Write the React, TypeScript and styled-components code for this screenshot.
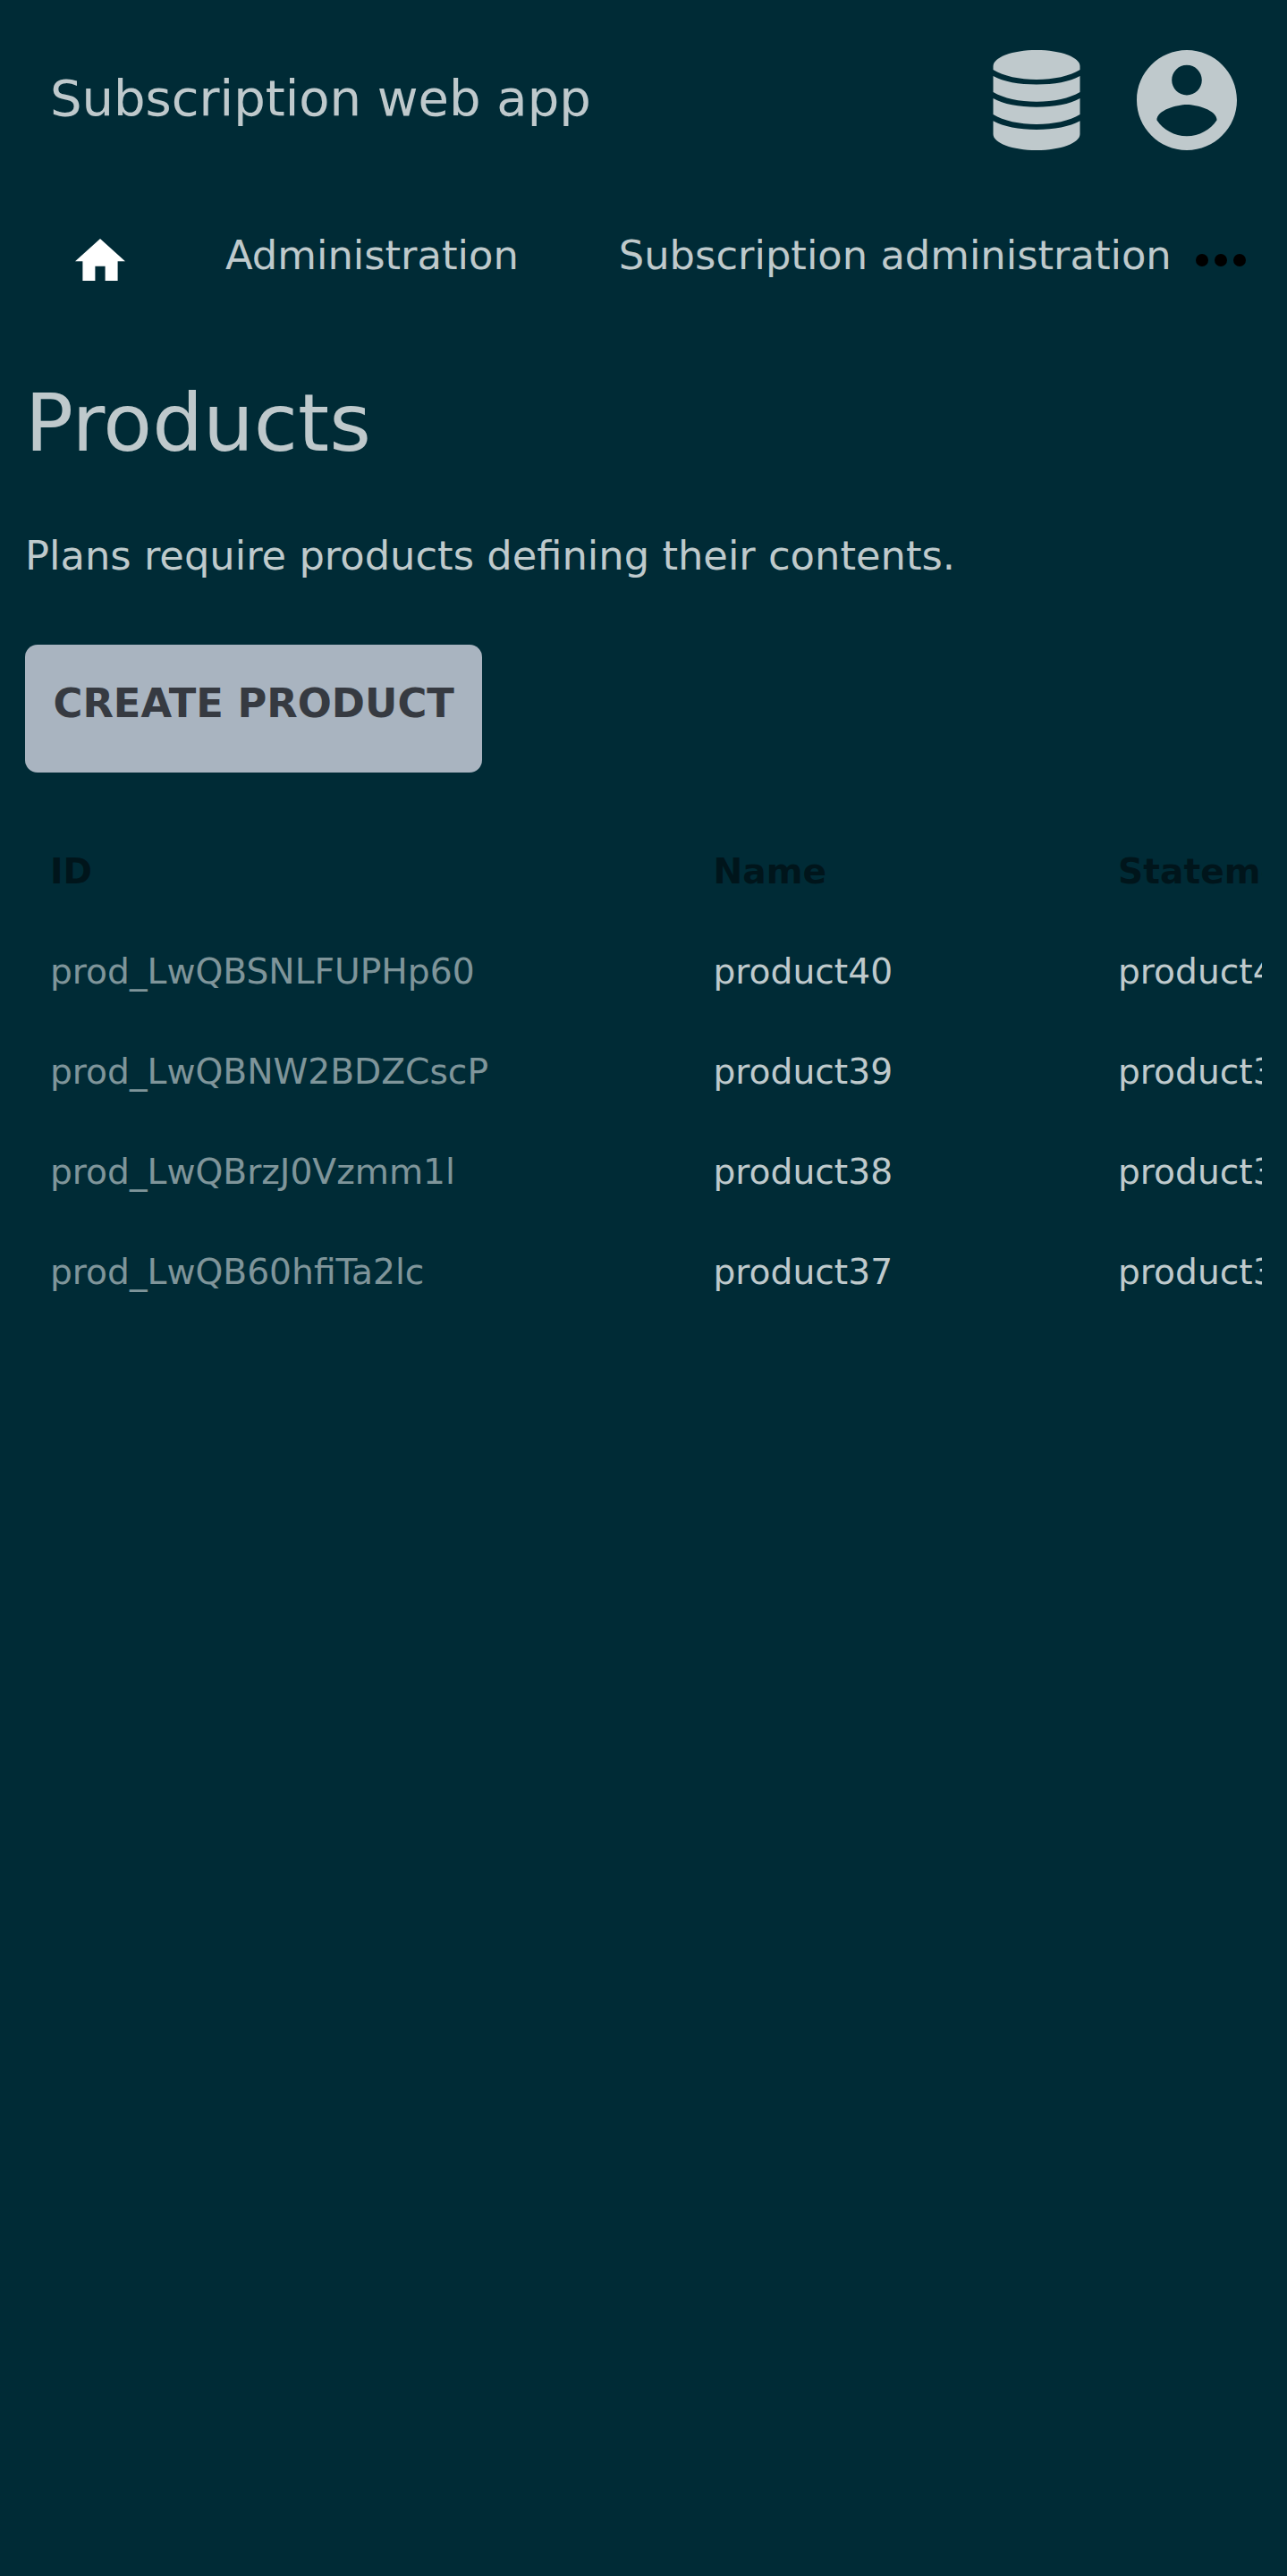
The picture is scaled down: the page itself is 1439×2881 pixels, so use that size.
import React from "react";
import styled, { createGlobalStyle } from "styled-components";

const GlobalStyle = createGlobalStyle`
  *, *::before, *::after { box-sizing: border-box; }
  html, body { margin: 0; background: #002b36; }
  body {
    font-family: "DejaVu Sans", sans-serif;
    font-size: 44.8px;
    color: rgba(255, 255, 255, 0.75);
  }
`;

const Page = styled.div`
  min-height: 2881px;
  width: 100%;
  overflow: hidden;
`;

const Header = styled.header`
  display: flex;
  align-items: center;
  justify-content: space-between;
  height: 224px;
  padding: 0 56px;
`;

const Title = styled.div`
  font-size: 56px;
  line-height: 70px;
  padding-bottom: 5px;
`;

const HeaderIcons = styled.div`
  display: flex;
  align-items: center;
  gap: 63.5px;
`;

const Icon = styled.svg<{ $w: number; $h: number }>`
  display: block;
  flex: none;
  width: ${(p) => p.$w}px;
  height: ${(p) => p.$h}px;
  fill: currentColor;
`;

const Nav = styled.nav`
  display: flex;
  height: 123px;
  padding-left: 84px;
`;

const HomeLink = styled.a`
  flex: none;
  width: 168px;
  padding-top: 42.5px;
  color: #fff;
`;

const NavLink = styled.a`
  flex: none;
  margin-right: 112px;
  line-height: 123px;
  white-space: nowrap;

  &:last-of-type { margin-right: 27px; }
`;

const More = styled.button`
  flex: none;
  height: 14px;
  margin-top: 59.5px;
  padding: 0;
  border: 0;
  background: none;
  color: #000;
`;

const Main = styled.main`
  padding: 61px 28px 0;
`;

const Heading = styled.h1`
  margin: 0;
  font-size: 89.6px;
  font-weight: 400;
  line-height: 130px;
`;

const Lead = styled.p`
  margin: 51px 0 67px;
  line-height: 65px;
`;

const CreateButton = styled.button`
  display: block;
  height: 143px;
  padding: 0 31.5px 12px;
  border: 0;
  border-radius: 14px;
  background: #a9b4c0;
  color: #363a41;
  font: 700 44.8px "DejaVu Sans", sans-serif;
  text-transform: uppercase;
`;

const TableWrap = styled.div`
  margin-top: 54px;
  overflow: hidden;
`;

const Table = styled.table`
  width: 1900px;
  table-layout: fixed;
  border-collapse: collapse;
  font-size: 39.2px;
  white-space: nowrap;
`;

const Column = styled.col<{ $w?: number }>`
  width: ${(p) => (p.$w ? `${p.$w}px` : "auto")};
`;

const Row = styled.tr`
  height: 112px;
`;

const HeadCell = styled.th`
  padding: 0 28px;
  color: rgba(0, 0, 0, 0.5);
  text-align: left;
`;

const Cell = styled.td<{ $muted?: boolean }>`
  padding: 0 28px;
  color: ${(p) => (p.$muted ? "rgba(255, 255, 255, 0.5)" : "inherit")};
`;

const products = [
  { id: "prod_LwQBSNLFUPHp60", name: "product40" },
  { id: "prod_LwQBNW2BDZCscP", name: "product39" },
  { id: "prod_LwQBrzJ0Vzmm1l", name: "product38" },
  { id: "prod_LwQB60hfiTa2lc", name: "product37" },
];

export default function App() {
  return (
    <Page>
      <GlobalStyle />
      <Header>
        <Title>Subscription web app</Title>
        <HeaderIcons>
          <Icon $w={98} $h={112} viewBox="0 0 98 112">
            <path d="M.5 22V18C.5 8 22 0 49 0S97.500 8 97.500 18V22C86 29 68 33 49 33S12 29 .5 22Z" />
            <path d="M.5 29C12 35.500 29 38.500 49 38.500S86 35.500 97.500 29V47C86 54 68 57.700 49 57.700S12 54 .5 47Z" />
            <path d="M.5 54C12 60.500 29 63.700 49 63.700S86 60.500 97.500 54V72C86 79 68 83 49 83S12 79 .5 72Z" />
            <path d="M.5 79.300C12 85.500 29 89 49 89S86 85.500 97.500 79.300V94C97.500 104 76 112 49 112S.5 104 .5 94Z" />
          </Icon>
          <Icon $w={112} $h={112} viewBox="2 2 20 20">
            <path d="M12 2C6.480 2 2 6.480 2 12s4.480 10 10 10 10-4.480 10-10S17.520 2 12 2zm0 3c1.660 0 3 1.340 3 3s-1.340 3-3 3-3-1.340-3-3 1.340-3 3-3zm0 14.200c-2.500 0-4.710-1.280-6-3.220.030-1.990 4-3.080 6-3.080 1.990 0 5.970 1.090 6 3.080-1.290 1.940-3.500 3.220-6 3.220z" />
          </Icon>
        </HeaderIcons>
      </Header>
      <Nav>
        <HomeLink>
          <Icon $w={56} $h={47.6} viewBox="2 3 20 17">
            <path d="M10 20v-6h4v6h5v-8h3L12 3 2 12h3v8z" />
          </Icon>
        </HomeLink>
        <NavLink>Administration</NavLink>
        <NavLink>Subscription administration</NavLink>
        <More aria-label="More">
          <Icon $w={56} $h={14} viewBox="0 0 56 14">
            <circle cx="7" cy="7" r="7" />
            <circle cx="28" cy="7" r="7" />
            <circle cx="49" cy="7" r="7" />
          </Icon>
        </More>
      </Nav>
      <Main>
        <Heading>Products</Heading>
        <Lead>Plans require products defining their contents.</Lead>
        <CreateButton>Create product</CreateButton>
        <TableWrap>
          <Table>
            <colgroup>
              <Column $w={741.5} />
              <Column $w={452.5} />
              <Column />
            </colgroup>
            <thead>
              <Row>
                <HeadCell>ID</HeadCell>
                <HeadCell>Name</HeadCell>
                <HeadCell>Statement descriptor</HeadCell>
              </Row>
            </thead>
            <tbody>
              {products.map((product) => (
                <Row key={product.id}>
                  <Cell $muted>{product.id}</Cell>
                  <Cell>{product.name}</Cell>
                  <Cell>{product.name}</Cell>
                </Row>
              ))}
            </tbody>
          </Table>
        </TableWrap>
      </Main>
    </Page>
  );
}
